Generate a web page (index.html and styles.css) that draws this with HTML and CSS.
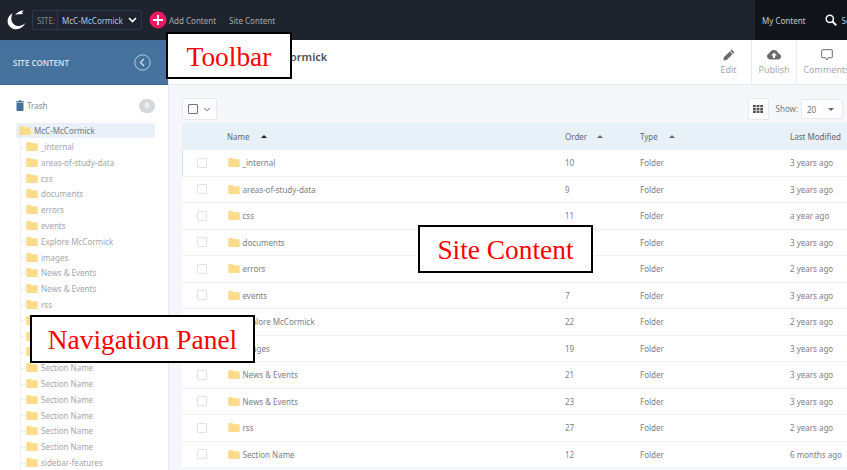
FILE: index.html
```html
<!DOCTYPE html>
<html lang="en">
<head>
<meta charset="utf-8">
<title>Site Content</title>
<link rel="stylesheet" href="styles.css">
</head>
<body>
<svg class="defs" width="0" height="0" aria-hidden="true">
  <symbol id="folder" viewBox="0 0 14 11"><path d="M0 1.2C0 .5.5 0 1.2 0h3.3c.5 0 .8.2 1.1.6L6.4 1.6h6.4c.7 0 1.2.5 1.2 1.2v7c0 .7-.5 1.2-1.2 1.2H1.2C.5 11 0 10.500 0 9.800z"/></symbol>
</svg>
<div class="app">
  <header class="topbar">
    <div class="topbar-left">
      <svg class="logo" width="20" height="20" viewBox="0 0 20 20"><path fill="#fff" d="M5.500 3.200C2.400 5 .4 8 .6 11.500c.3 4.700 4.300 8 8.900 7.800 3.700-.2 7-2.500 9-6.200-2.200 2-4.800 3-7.500 2.800C7 15.600 4.200 12.500 4.300 8.500c0-2 .4-3.800 1.200-5.300z"/><path fill="#fff" d="M8 5.500C9.500 2.700 12.800.6 17 .6c-1.200.8-1.800 1.500-2.200 2.400.6 0 1.200.1 1.800.3-1.700 1-3.300 1.300-5 .9-1.400-.2-2.700.4-3.600 1.300z"/></svg>
      <div class="site-select">
        <span class="site-label">SITE:</span>
        <span class="site-value">McC-McCormick</span>
        <svg class="site-caret" width="9" height="6" viewBox="0 0 9 6"><path d="M1 1l3.500 3.500L8 1" fill="none" stroke="#fff" stroke-width="1.600"/></svg>
      </div>
      <svg class="add-icon" width="18" height="18" viewBox="0 0 18 18"><circle cx="9" cy="9" r="8.500" fill="#e8195f"/><path d="M9 4v10M4 9h10" stroke="#fff" stroke-width="1.800"/></svg>
      <a class="top-link">Add Content</a>
      <a class="top-link top-link-gap">Site Content</a>
    </div>
    <div class="topbar-right">
      <a class="top-link top-link-light">My Content</a>
      <svg class="search-icon" width="12" height="12" viewBox="0 0 12 12"><circle cx="4.800" cy="4.800" r="3.600" fill="none" stroke="#fff" stroke-width="1.500"/><path d="M7.500 7.500l3.800 3.800" stroke="#fff" stroke-width="1.900"/></svg>
      <a class="top-link top-link-light">Search</a>
    </div>
  </header>
  <div class="body-row">
    <aside class="sidebar">
      <div class="side-head">
        <span class="side-title">SITE CONTENT</span>
        <svg class="side-back" width="17" height="17" viewBox="0 0 17 17"><circle cx="8.500" cy="8.500" r="7.700" fill="none" stroke="#b9cde0" stroke-width="1"/><path d="M10 5l-3.500 3.500L10 12" fill="none" stroke="#d6e2ee" stroke-width="1.200"/></svg>
      </div>
      <div class="trash-row">
        <svg class="trash-icon" width="8" height="11" viewBox="0 0 8 11"><path fill="#44719b" d="M0 1.300h8v1H0zM2.700.2h2.600v1H2.700zM.5 2.800h7V10c0 .5-.4 1-1 1h-5c-.6 0-1-.5-1-1z"/></svg>
        <span class="trash-label">Trash</span>
        <span class="trash-count">0</span>
      </div>
      <div class="tree-root">
        <svg class="folder folder-root"><use href="#folder"/></svg>
        <span>McC-McCormick</span>
      </div>
      <ul class="tree">
        <li><svg class="folder"><use href="#folder"/></svg>_internal</li>
        <li><svg class="folder"><use href="#folder"/></svg>areas-of-study-data</li>
        <li><svg class="folder"><use href="#folder"/></svg>css</li>
        <li><svg class="folder"><use href="#folder"/></svg>documents</li>
        <li><svg class="folder"><use href="#folder"/></svg>errors</li>
        <li><svg class="folder"><use href="#folder"/></svg>events</li>
        <li><svg class="folder"><use href="#folder"/></svg>Explore McCormick</li>
        <li><svg class="folder"><use href="#folder"/></svg>images</li>
        <li><svg class="folder"><use href="#folder"/></svg>News &amp; Events</li>
        <li><svg class="folder"><use href="#folder"/></svg>News &amp; Events</li>
        <li><svg class="folder"><use href="#folder"/></svg>rss</li>
        <li><svg class="folder"><use href="#folder"/></svg>Section Name</li>
        <li><svg class="folder"><use href="#folder"/></svg>Section Name</li>
        <li><svg class="folder"><use href="#folder"/></svg>Section Name</li>
        <li><svg class="folder"><use href="#folder"/></svg>Section Name</li>
        <li><svg class="folder"><use href="#folder"/></svg>Section Name</li>
        <li><svg class="folder"><use href="#folder"/></svg>Section Name</li>
        <li><svg class="folder"><use href="#folder"/></svg>Section Name</li>
        <li><svg class="folder"><use href="#folder"/></svg>Section Name</li>
        <li><svg class="folder"><use href="#folder"/></svg>Section Name</li>
        <li><svg class="folder"><use href="#folder"/></svg>sidebar-features</li>
      </ul>
    </aside>
    <main class="main">
      <div class="page-head">
        <h1 class="page-title">McC-McCormick</h1>
        <div class="page-actions">
          <button class="action">
            <svg width="12" height="12" viewBox="0 0 12 12"><path fill="#6b6b6b" d="M8.600.6l2.800 2.800-1.300 1.300-2.800-2.800zM6.700 2.500l2.800 2.800-5.800 5.800L.4 11.600l.5-3.300z"/></svg>
            <span>Edit</span>
          </button>
          <button class="action">
            <svg width="14" height="12" viewBox="0 0 14 12"><path fill="#6b6b6b" d="M3.400 10.500C1.500 10.500 0 9.100 0 7.300c0-1.500 1-2.700 2.400-3.100C2.900 2.300 4.700 1 6.800 1c2.300 0 4.200 1.500 4.600 3.600 1.500.3 2.600 1.400 2.600 2.900 0 1.700-1.400 3-3.100 3z"/><path fill="#fff" d="M7 3.400l2.800 3H8.100v2.700H5.900V6.400H4.200z"/></svg>
            <span>Publish</span>
          </button>
          <button class="action action-last">
            <svg width="12" height="12" viewBox="0 0 12 12"><path fill="none" stroke="#6b6b6b" stroke-width="1" d="M1.200.7h9.600c.3 0 .5.200.5.500v7c0 .3-.2.500-.5.500H7.500L6 11 4.500 8.700H1.200c-.3 0-.5-.2-.5-.5v-7c0-.3.200-.5.500-.5z"/></svg>
            <span>Comments</span>
          </button>
        </div>
      </div>
      <div class="controls">
        <div class="check-menu">
          <span class="check-box"></span>
          <svg width="8" height="5" viewBox="0 0 8 5"><path d="M1 1l3 2.800L7 1" fill="none" stroke="#777" stroke-width="1"/></svg>
        </div>
        <div class="controls-right">
          <div class="grid-btn">
            <svg width="10" height="8" viewBox="0 0 10 8"><path fill="#555" d="M0 0h2.800v2.300H0zM3.600 0h2.800v2.300H3.600zM7.200 0H10v2.300H7.200zM0 2.900h2.800v2.300H0zM3.600 2.900h2.800v2.300H3.600zM7.200 2.900H10v2.300H7.200zM0 5.800h2.800V8H0zM3.600 5.800h2.800V8H3.600zM7.200 5.800H10V8H7.200z"/></svg>
          </div>
          <span class="show-label">Show:</span>
          <div class="show-select"><span>20</span><i class="tri-down"></i></div>
        </div>
      </div>
      <div class="table">
        <div class="thead">
          <span class="c-check"></span>
          <span class="c-name">Name<i class="tri-up"></i></span>
          <span class="c-order">Order<i class="tri-up tri-light"></i></span>
          <span class="c-type">Type<i class="tri-up tri-light"></i></span>
          <span class="c-mod">Last Modified</span>
        </div>
        <div class="row row-first"><span class="c-check"><i class="row-box"></i></span><span class="c-name"><svg class="folder folder-lg"><use href="#folder"/></svg>_internal</span><span class="c-order">10</span><span class="c-type">Folder</span><span class="c-mod">3 years ago</span></div>
        <div class="row"><span class="c-check"><i class="row-box"></i></span><span class="c-name"><svg class="folder folder-lg"><use href="#folder"/></svg>areas-of-study-data</span><span class="c-order">9</span><span class="c-type">Folder</span><span class="c-mod">3 years ago</span></div>
        <div class="row"><span class="c-check"><i class="row-box"></i></span><span class="c-name"><svg class="folder folder-lg"><use href="#folder"/></svg>css</span><span class="c-order">11</span><span class="c-type">Folder</span><span class="c-mod">a year ago</span></div>
        <div class="row"><span class="c-check"><i class="row-box"></i></span><span class="c-name"><svg class="folder folder-lg"><use href="#folder"/></svg>documents</span><span class="c-order">8</span><span class="c-type">Folder</span><span class="c-mod">3 years ago</span></div>
        <div class="row"><span class="c-check"><i class="row-box"></i></span><span class="c-name"><svg class="folder folder-lg"><use href="#folder"/></svg>errors</span><span class="c-order">6</span><span class="c-type">Folder</span><span class="c-mod">2 years ago</span></div>
        <div class="row"><span class="c-check"><i class="row-box"></i></span><span class="c-name"><svg class="folder folder-lg"><use href="#folder"/></svg>events</span><span class="c-order">7</span><span class="c-type">Folder</span><span class="c-mod">3 years ago</span></div>
        <div class="row"><span class="c-check"><i class="row-box"></i></span><span class="c-name"><svg class="folder folder-lg"><use href="#folder"/></svg>Explore McCormick</span><span class="c-order">22</span><span class="c-type">Folder</span><span class="c-mod">2 years ago</span></div>
        <div class="row"><span class="c-check"><i class="row-box"></i></span><span class="c-name"><svg class="folder folder-lg"><use href="#folder"/></svg>images</span><span class="c-order">19</span><span class="c-type">Folder</span><span class="c-mod">3 years ago</span></div>
        <div class="row"><span class="c-check"><i class="row-box"></i></span><span class="c-name"><svg class="folder folder-lg"><use href="#folder"/></svg>News &amp; Events</span><span class="c-order">21</span><span class="c-type">Folder</span><span class="c-mod">3 years ago</span></div>
        <div class="row"><span class="c-check"><i class="row-box"></i></span><span class="c-name"><svg class="folder folder-lg"><use href="#folder"/></svg>News &amp; Events</span><span class="c-order">23</span><span class="c-type">Folder</span><span class="c-mod">3 years ago</span></div>
        <div class="row"><span class="c-check"><i class="row-box"></i></span><span class="c-name"><svg class="folder folder-lg"><use href="#folder"/></svg>rss</span><span class="c-order">27</span><span class="c-type">Folder</span><span class="c-mod">2 years ago</span></div>
        <div class="row"><span class="c-check"><i class="row-box"></i></span><span class="c-name"><svg class="folder folder-lg"><use href="#folder"/></svg>Section Name</span><span class="c-order">12</span><span class="c-type">Folder</span><span class="c-mod">6 months ago</span></div>
      </div>
    </main>
  </div>
  <div class="callout callout-toolbar">Toolbar</div>
  <div class="callout callout-content">Site Content</div>
  <div class="callout callout-nav">Navigation Panel</div>
</div>
</body>
</html>
```

FILE: styles.css
```css
* { box-sizing: border-box; }
html, body { margin: 0; padding: 0; height: 100%; overflow: hidden; }
body { font-family: "Noto Sans", "Open Sans", sans-serif; font-size: 8px; color: #7b8087; background: #fff; }
.defs { position: absolute; }
.app { position: relative; width: 847px; height: 470px; overflow: hidden; display: flex; flex-direction: column; }

.topbar { height: 40px; flex: none; display: flex; justify-content: space-between; background: #1f232e; }
.topbar-left { display: flex; align-items: center; padding-left: 7px; }
.logo { margin-right: 5px; }
.site-select { width: 110px; height: 20px; display: flex; align-items: center; border: 1px solid #2c3a4f; border-radius: 2px; margin-right: 7px; }
.site-label { width: 25px; height: 100%; display: flex; align-items: center; padding-left: 4px; color: #7f858e; border-right: 1px solid #2c3a4f; }
.site-value { padding-left: 4px; color: #a9c8e8; flex: 1; white-space: nowrap; }
.site-caret { margin-right: 4px; }
.add-icon { margin-right: 2px; }
.top-link { color: #a6a9ae; white-space: nowrap; }
.top-link-gap { margin-left: 13px; }
.topbar-right { width: 92px; flex: none; display: flex; align-items: center; padding-left: 7px; background: #12141b; overflow: hidden; }
.top-link-light { color: #c5c7cb; }
.search-icon { margin: 0 5px 0 19px; flex: none; }

.body-row { flex: 1; display: flex; min-height: 0; }
.sidebar { width: 169px; flex: none; border-right: 1px solid #e6eaf0; background: #fff; overflow: hidden; }
.side-head { height: 45px; display: flex; align-items: center; justify-content: space-between; padding: 0 17px 0 13px; background: linear-gradient(#44719b, #47749f); border-bottom: 1px solid #3d6890; }
.side-title { color: #d6e0ea; font-size: 8px; font-weight: 600; }
.trash-row { height: 15px; display: flex; align-items: center; margin: 13px 13px 0 16px; color: #7a8a9a; }
.trash-icon { margin-right: 3px; }
.trash-label { flex: 1; color: #7f8a96; }
.trash-count { width: 16px; height: 14px; border-radius: 8px; background: #d5d8dc; color: #fff; font-size: 7px; font-weight: 700; display: flex; align-items: center; justify-content: center; }
.tree-root { height: 15.500px; display: flex; align-items: center; margin: 9.500px 13px 0 16px; padding-left: 3px; background: #e9f0f8; border-radius: 2px; color: #74787e; }
.folder { width: 12px; height: 9px; fill: #fcdc8a; flex: none; margin-right: 3px; }
.folder-lg { margin: 0 2.500px 0 1px; }
.tree { list-style: none; margin: .6px 0 0 20px; padding: 0; border-left: 1px solid #edf0f3; color: #a3a6ab; }
.tree li { height: 15.800px; display: flex; align-items: center; padding-left: 5px; white-space: nowrap; position: relative; }
.tree li::before { content: ""; position: absolute; left: 0; top: 8px; width: 5px; height: 1px; background: #edf0f3; }

.main { flex: 1; min-width: 0; background: #f5f7fa; overflow: hidden; }
.page-head { height: 45px; display: flex; justify-content: space-between; background: #fff; border-bottom: 1px solid #e4e8ee; }
.page-title { margin: 0; align-self: center; padding: 0 0 12px 72px; font-size: 11px; font-weight: 600; color: #4e5258; }
.page-actions { display: flex; margin-right: -9px; }
.action { width: 45px; height: 44px; padding: 9px 0 0; background: #fff; border: 0; border-left: 1px solid #e9ecf0; display: flex; flex-direction: column; align-items: center; font: inherit; color: #a8a8a8; }
.action svg { margin-bottom: 2px; height: 12px; }
.action span { white-space: nowrap; font-size: 9px; line-height: 13px; }
.page-actions .action:first-child { border-left: 0; }
.action-last { width: 60px; }

.controls { height: 38px; display: flex; justify-content: space-between; padding: 13px 4px 0 13px; }
.check-menu { width: 35px; height: 22px; display: flex; align-items: center; gap: 5px; padding-left: 5px; background: #fff; border: 1px solid #e6e9ee; border-radius: 2px; }
.check-box { width: 10px; height: 10px; border: 1px solid #7c6e7e; border-radius: 1px; }
.controls-right { display: flex; align-items: flex-start; }
.grid-btn { width: 21px; height: 22px; display: flex; align-items: center; justify-content: center; background: #fff; border: 1px solid #e6e9ee; border-radius: 2px; margin-right: 7px; }
.show-label { line-height: 22px; margin-right: 3px; color: #777b82; }
.show-select { width: 42px; height: 20px; margin-top: 1px; display: flex; align-items: center; justify-content: space-between; padding: 0 8px 0 5px; background: #fff; border: 1px solid #e6e9ee; border-radius: 2px; color: #6f7379; }
.tri-down { width: 0; height: 0; border: 3px solid transparent; border-top: 3px solid #666; border-bottom: 0; }

.table { margin-left: 13px; }
.thead, .row { display: flex; align-items: center; white-space: nowrap; }
.thead { height: 27px; padding-bottom: 1px; background: #e8f0f8; color: #62676e; }
.row { height: 26.500px; background: #fff; border-bottom: 1px solid #eff2f6; }
.row-first { border-left: 1px solid #cfe5fa; }
.row-first .c-check { width: 44px; padding-left: 14px; }
.c-check { width: 45px; padding-left: 15px; flex: none; display: flex; }
.c-name { width: 338px; flex: none; display: flex; align-items: center; }
.c-order { width: 75px; flex: none; display: flex; align-items: center; }
.c-type { width: 150px; flex: none; display: flex; align-items: center; }
.c-mod { width: 57px; flex: none; }
.row-box { width: 10px; height: 10px; border: 1px solid #dde3ea; border-radius: 1px; background: #fff; }
.tri-up { width: 0; height: 0; margin-left: 11px; border: 3px solid transparent; border-bottom: 3px solid #222; border-top: 0; }
.tri-light { border-bottom-color: #667; }
.c-order .tri-light { margin-left: 10px; }

.callout { position: absolute; display: flex; align-items: center; justify-content: center; padding-top: 3px; background: #fff; border: 2px solid #000; color: #f00; font-family: "Liberation Serif", serif; font-size: 27.400px; white-space: nowrap; }
.callout-toolbar { left: 166px; top: 32px; width: 126px; height: 47px; }
.callout-content { left: 418px; top: 225px; width: 175px; height: 48px; }
.callout-nav { left: 30px; top: 315px; width: 225px; height: 48px; }
```
